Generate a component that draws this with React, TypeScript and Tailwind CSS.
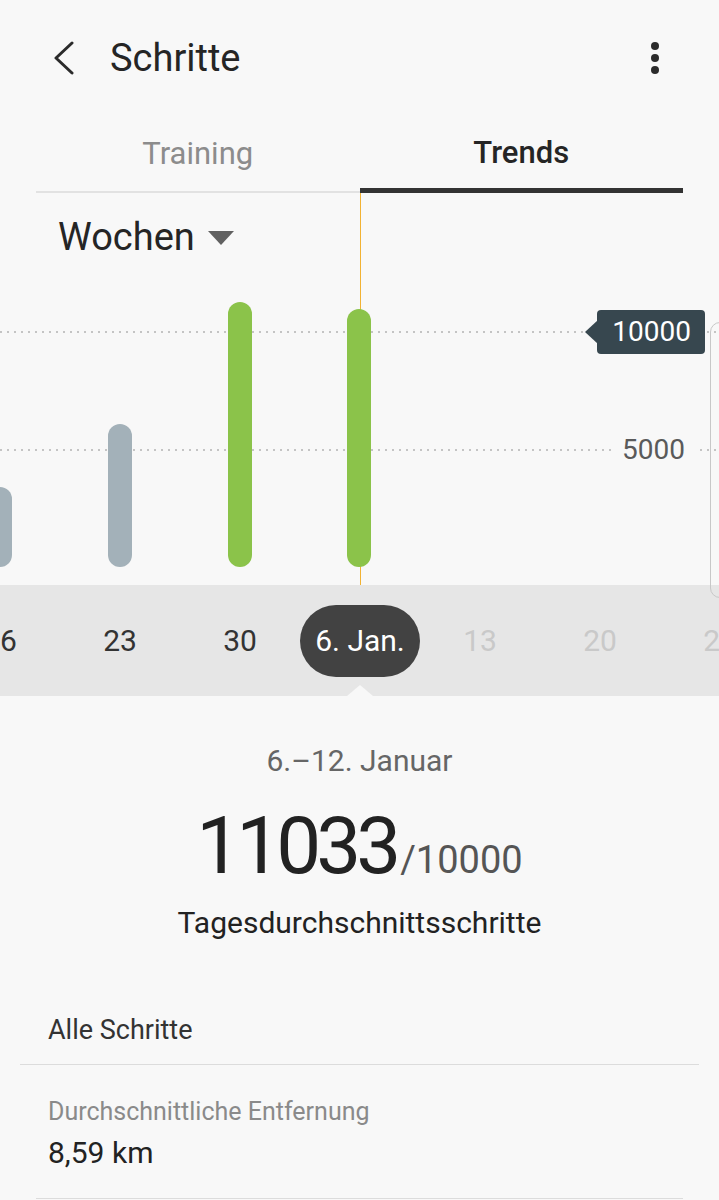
import React from 'react';

const weeks = [
  { label: '16', center: 0, top: 294, color: '#a3b1b9' },
  { label: '23', center: 120, top: 231, color: '#a3b1b9' },
  { label: '30', center: 240, top: 109, color: '#8bc34a' },
  { label: '6. Jan.', center: 359, top: 116, color: '#8bc34a', active: true },
  { label: '13', center: 480 },
  { label: '20', center: 600 },
  { label: '27', center: 720 },
];

function ChartLines() {
  const bottom = 374;
  return (
    <svg className="absolute inset-0" width={719} height={392} viewBox="0 0 719 392">
      {/* grid */}
      <line x1={0} y1={139} x2={719} y2={139} stroke="#c4c4c4" strokeWidth={2} strokeDasharray="2 5" />
      <line x1={0} y1={257} x2={719} y2={257} stroke="#c4c4c4" strokeWidth={2} strokeDasharray="2 5" />
      {/* current week marker */}
      <line x1={360.5} y1={0} x2={360.5} y2={392} stroke="#f2b233" strokeWidth={1} />
      {weeks
        .filter((w) => w.top !== undefined)
        .map((w) => (
          <rect
            key={w.label}
            x={w.center - 12}
            y={w.top}
            width={24}
            height={bottom - (w.top as number)}
            rx={12}
            fill={w.color}
          />
        ))}
      {/* goal tag arrow */}
      <polygon points="585,139 598,127 598,151" fill="#37474f" />
    </svg>
  );
}

export default function App() {
  return (
    <div className="relative w-[719px] h-[1200px] overflow-hidden bg-[#f8f8f8] font-['Roboto',sans-serif] text-[#252525]">
      {/* Header */}
      <div className="h-[116px] flex items-center">
        <svg className="ml-[52px]" width={22} height={34} viewBox="0 0 22 34">
          <polyline points="20,2 4,17 20,32" fill="none" stroke="#2b2b2b" strokeWidth={3} strokeLinecap="round" strokeLinejoin="round" />
        </svg>
        <h1 className="ml-[36px] text-[38px] leading-none">Schritte</h1>
        <div className="ml-auto mr-[60px] flex flex-col gap-[4px]">
          <span className="w-[8px] h-[8px] rounded-full bg-[#2b2b2b]" />
          <span className="w-[8px] h-[8px] rounded-full bg-[#2b2b2b]" />
          <span className="w-[8px] h-[8px] rounded-full bg-[#2b2b2b]" />
        </div>
      </div>

      {/* Tabs */}
      <div className="mx-[36px] h-[77px] flex items-end">
        <div className="flex-1 h-[76px] flex items-center justify-center border-b-2 border-[#e2e2e2] text-[31px] text-[#8c8c8c]">
          Training
        </div>
        <div className="flex-1 h-[77px] flex items-center justify-center pt-[3px] border-b-[5px] border-[#333333] text-[31px] font-medium text-[#252525]">
          Trends
        </div>
      </div>

      {/* Chart */}
      <div className="relative h-[392px]">
        <ChartLines />
        <div className="relative flex items-center pl-[58px] pt-[22px]">
          <span className="text-[38px] leading-[44px]">Wochen</span>
          <svg className="ml-[12px] mt-[2px]" width={28} height={16} viewBox="0 0 28 16">
            <polygon points="1,1 27,1 14,15" fill="#616161" />
          </svg>
        </div>
        <div className="absolute left-[597px] top-[117px] w-[108px] h-[44px] rounded-[4px] bg-[#37474f] flex items-center justify-end pr-[14px] text-[28px] text-white">
          10000
        </div>
        <div className="absolute left-[612px] top-[257px] -translate-y-1/2 px-[10px] bg-[#f8f8f8] text-[28px] leading-[32px] text-[#5a5a5a]">
          5000
        </div>
      </div>

      {/* Week strip */}
      <div className="relative h-[111px] bg-[#e6e6e6] overflow-hidden">
        <div className="h-full flex items-center -ml-[60px]">
          {weeks.map((w) => (
            <div key={w.label} className="w-[120px] shrink-0 flex justify-center">
              {w.active ? (
                <span className="w-[122px] h-[72px] rounded-full bg-[#424242] text-white text-[30px] flex items-center justify-center">
                  {w.label}
                </span>
              ) : (
                <span className={`text-[30px] ${w.top !== undefined ? 'text-[#333333]' : 'text-[#c9c9c9]'}`}>
                  {w.label}
                </span>
              )}
            </div>
          ))}
        </div>
        <div className="absolute bottom-0 left-[347px] w-0 h-0 border-l-[13px] border-r-[13px] border-b-[11px] border-l-transparent border-r-transparent border-b-[#f8f8f8]" />
      </div>

      {/* Scroll panel edge */}
      <div className="absolute left-[710px] top-[322px] w-[30px] h-[276px] rounded-[10px] border border-[#c8c8c8]" />

      {/* Summary */}
      <div className="flex flex-col items-center pt-[47px]">
        <p className="text-[30px] leading-[36px] text-[#666666]">6.–12. Januar</p>
        <div className="mt-[27px] h-[80px] flex items-baseline">
          <span className="text-[80px] leading-[80px] tracking-[-5px] text-[#222222]">11033</span>
          <span className="ml-[4px] text-[38px] leading-none text-[#555555]">/10000</span>
        </div>
        <p className="mt-[19px] text-[30px] leading-[36px] text-[#222222]">Tagesdurchschnittsschritte</p>
      </div>

      <div className="mx-[20px] mt-[73px] border-b border-[#dcdcdc] px-[28px] pb-[18px]">
        <p className="text-[27px] leading-[32px] text-[#333333]">Alle Schritte</p>
      </div>
      <div className="mx-[36px] border-b border-[#dcdcdc] px-[12px] pt-[32px] pb-[27px]">
        <p className="text-[25px] leading-[30px] text-[#8a8a8a]">Durchschnittliche Entfernung</p>
        <p className="mt-[8px] text-[30px] leading-[36px] text-[#222222]">8,59 km</p>
      </div>
    </div>
  );
}
